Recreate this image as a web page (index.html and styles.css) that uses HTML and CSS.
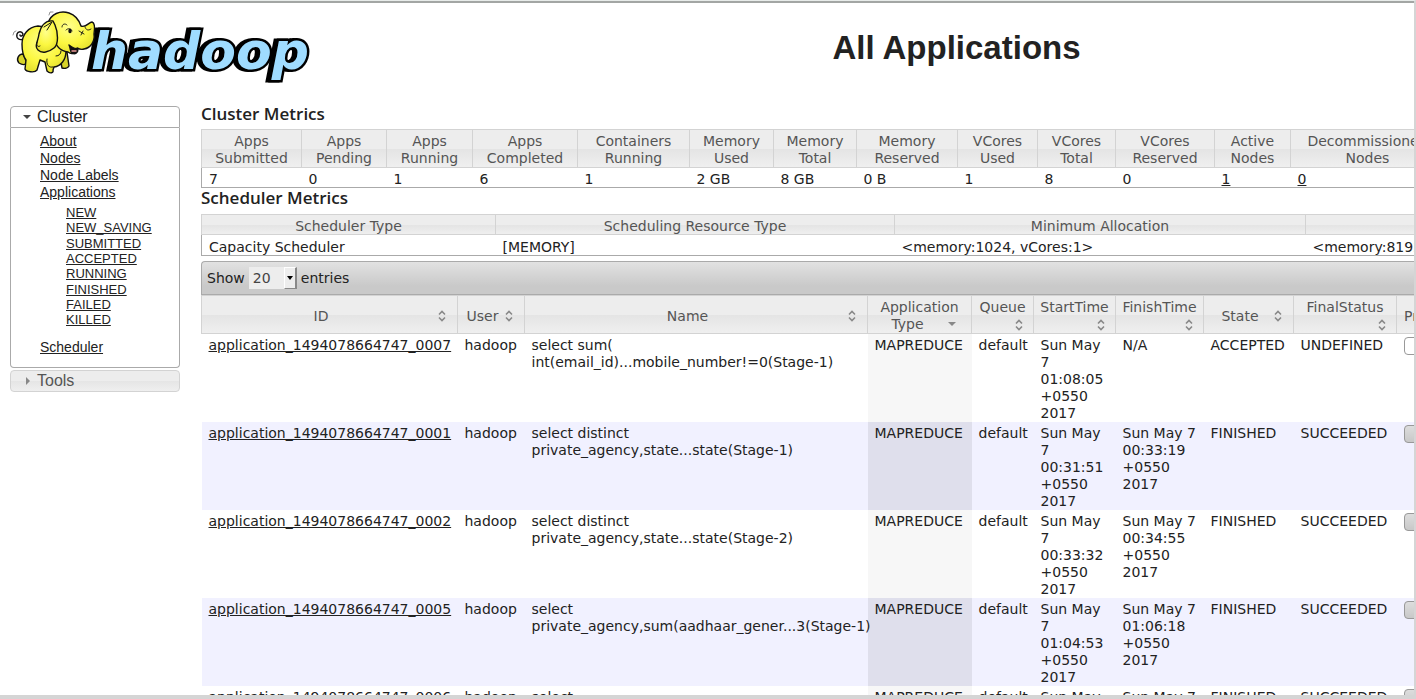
FILE: index.html
```html
<!DOCTYPE html>
<html lang="en">
<head>
<meta charset="utf-8">
<title>All Applications</title>
<link rel="stylesheet" href="styles.css">
</head>
<body>
<svg class="defs" aria-hidden="true">
  <symbol id="sort" viewBox="0 0 8 12"><path d="M1 4.5 4 1.5 7 4.5M1 7.5 4 10.500 7 7.500" fill="none" stroke="#888" stroke-width="1.6"/></symbol>
</svg>
<div class="frame">
  <header class="header">
    <a class="logo" href="#" aria-label="Hadoop">
      <svg width="304" height="76" viewBox="10 8 304 76">
        <defs>
          <radialGradient id="skin" cx="0.45" cy="0.35" r="0.7">
            <stop offset="0" stop-color="#ffff8c"/><stop offset="0.6" stop-color="#fbf740"/><stop offset="1" stop-color="#e0dc2c"/>
          </radialGradient>
        </defs>
        <text class="wordmark" x="91" y="69">hadoop</text>
        <g stroke="#111" stroke-width="1.400" stroke-linejoin="round" stroke-linecap="round">
          <path d="M24 39C19 41 16 38 17 34C18 31 22 31 23 34C23 36 20 37 20 35" fill="none"/>
          <path d="M13 35 14 32 16 31M49 15 50 12 53 12" fill="none" stroke="#777" stroke-width="0.800"/>
          <path d="M23 54C18 54 16 60 19 63C22 65 25 65 27 63Z" fill="#d8d42a"/>
          <path d="M60 57 62 68C65 69 68 68 69 66L67 52Z" fill="#d8d42a"/>
          <path d="M38 26C28 27 22 35 22 44C22 51 23 56 26 60L25 69C26 72 35 73 37 70L40 60 45 62 47 71C50 74 54 73 53 70L54 67C61 66 66 60 66 51L62 30Z" fill="url(#skin)"/>
          <path d="M48 23C51 14 60 10 69 13C75 15 79 20 81 26C86 28 89 22 92 22C95 23 95 28 94 34C95 41 91 48 84 49C81 50 79 49 77 48C76 53 72 55 68 52C60 51 55 45 54 36Z" fill="url(#skin)"/>
          <path d="M69 45C73 48 76 49 78 49C78 53 75 55 72 53C70 52 71 49 69 45Z" fill="#111"/>
          <path d="M72 51 76 51" stroke="#e99" stroke-width="1.500"/>
          <path d="M53 21C45 20 41 26 39 34C38 42 34 46 38 50C42 54 49 52 54 48C59 44 58 32 55 25C54 23 53 21 53 21Z" fill="url(#skin)"/>
          <path d="M44 27 52 22 47 30M40 46C37 48 36 44 37 42M56 56C59 56 61 54 61 51M47 59C46 65 49 68 53 67" fill="none" stroke-width="1"/>
          <path d="M62 27C62 24 65 23 67 25M66 30C68 28 71 28 72 31M79 31 84 34M81 35 83 31M85 27C86 30 88 31 91 29" fill="none" stroke-width="0.900"/>
          <ellipse cx="70" cy="31" rx="1" ry="1.500" fill="#111"/>
        </g>
      </svg>
    </a>
    <h1 class="title">All Applications</h1>
  </header>
  <div class="body">
    <nav class="sidebar">
      <h3 class="panel-head open"><button type="button"><span class="tri down"></span>Cluster</button></h3>
      <div class="panel">
        <ul class="menu">
          <li><a href="#">About</a></li>
          <li><a href="#">Nodes</a></li>
          <li><a href="#">Node Labels</a></li>
          <li><a href="#">Applications</a>
            <ul class="submenu">
              <li><a href="#">NEW</a></li>
              <li><a href="#">NEW_SAVING</a></li>
              <li><a href="#">SUBMITTED</a></li>
              <li><a href="#">ACCEPTED</a></li>
              <li><a href="#">RUNNING</a></li>
              <li><a href="#">FINISHED</a></li>
              <li><a href="#">FAILED</a></li>
              <li><a href="#">KILLED</a></li>
            </ul>
          </li>
          <li><a href="#">Scheduler</a></li>
        </ul>
      </div>
      <h3 class="panel-head closed"><button type="button"><span class="tri right"></span>Tools</button></h3>
    </nav>
    <main class="content">
      <h2>Cluster Metrics</h2>
      <table class="info cluster">
        <colgroup><col class="w100"><col class="w85"><col class="w86"><col class="w105"><col class="w112"><col class="w84"><col class="w83"><col class="w101"><col class="w80"><col class="w78"><col class="w99"><col class="w76"><col class="w154"></colgroup>
        <thead><tr><th>Apps<br>Submitted</th><th>Apps<br>Pending</th><th>Apps<br>Running</th><th>Apps<br>Completed</th><th>Containers<br>Running</th><th>Memory<br>Used</th><th>Memory<br>Total</th><th>Memory<br>Reserved</th><th>VCores<br>Used</th><th>VCores<br>Total</th><th>VCores<br>Reserved</th><th>Active<br>Nodes</th><th>Decommissioned<br>Nodes</th></tr></thead>
        <tbody><tr><td>7</td><td>0</td><td>1</td><td>6</td><td>1</td><td>2 GB</td><td>8 GB</td><td>0 B</td><td>1</td><td>8</td><td>0</td><td><a href="#">1</a></td><td><a href="#">0</a></td></tr></tbody>
      </table>
      <h2>Scheduler Metrics</h2>
      <table class="info scheduler">
        <colgroup><col class="w294"><col class="w399"><col class="w411"><col class="w411"></colgroup>
        <thead><tr><th>Scheduler Type</th><th>Scheduling Resource Type</th><th>Minimum Allocation</th><th></th></tr></thead>
        <tbody><tr><td>Capacity Scheduler</td><td>[MEMORY]</td><td>&lt;memory:1024, vCores:1&gt;</td><td>&lt;memory:8192, vCores:8&gt;</td></tr></tbody>
      </table>
      <div class="toolbar">
        <label for="len">Show</label>
        <span class="select"><select id="len"><option>20</option><option>40</option></select><span class="arrow"></span></span>
        <span>entries</span>
      </div>
      <table class="apps">
        <colgroup><col class="w256"><col class="w67"><col class="w343"><col class="w104"><col class="w62"><col class="w82"><col class="w88"><col class="w90"><col class="w103"><col class="w100"></colgroup>
        <thead><tr>
          <th><div class="sorth">ID<svg><use href="#sort"/></svg></div></th>
          <th><div class="sorth">User<svg><use href="#sort"/></svg></div></th>
          <th><div class="sorth">Name<svg><use href="#sort"/></svg></div></th>
          <th><div class="sorth low">Application Type<span class="desc"></span></div></th>
          <th><div class="sorth low">Queue<br>&nbsp;<svg><use href="#sort"/></svg></div></th>
          <th><div class="sorth low">StartTime<br>&nbsp;<svg><use href="#sort"/></svg></div></th>
          <th><div class="sorth low">FinishTime<br>&nbsp;<svg><use href="#sort"/></svg></div></th>
          <th><div class="sorth">State<svg><use href="#sort"/></svg></div></th>
          <th><div class="sorth low">FinalStatus<br>&nbsp;<svg><use href="#sort"/></svg></div></th>
          <th class="left">Progress</th>
        </tr></thead>
        <tbody>
          <tr><td><a href="#">application_1494078664747_0007</a></td><td>hadoop</td><td>select sum(<br>int(email_id)...mobile_number!=0(Stage-1)</td><td>MAPREDUCE</td><td>default</td><td>Sun May 7 01:08:05 +0550 2017</td><td>N/A</td><td>ACCEPTED</td><td>UNDEFINED</td><td><div class="bar empty"></div></td></tr>
          <tr><td><a href="#">application_1494078664747_0001</a></td><td>hadoop</td><td>select distinct<br>private_agency,state...state(Stage-1)</td><td>MAPREDUCE</td><td>default</td><td>Sun May 7 00:31:51 +0550 2017</td><td>Sun May 7 00:33:19 +0550 2017</td><td>FINISHED</td><td>SUCCEEDED</td><td><div class="bar"></div></td></tr>
          <tr><td><a href="#">application_1494078664747_0002</a></td><td>hadoop</td><td>select distinct<br>private_agency,state...state(Stage-2)</td><td>MAPREDUCE</td><td>default</td><td>Sun May 7 00:33:32 +0550 2017</td><td>Sun May 7 00:34:55 +0550 2017</td><td>FINISHED</td><td>SUCCEEDED</td><td><div class="bar"></div></td></tr>
          <tr><td><a href="#">application_1494078664747_0005</a></td><td>hadoop</td><td>select<br>private_agency,sum(aadhaar_gener...3(Stage-1)</td><td>MAPREDUCE</td><td>default</td><td>Sun May 7 01:04:53 +0550 2017</td><td>Sun May 7 01:06:18 +0550 2017</td><td>FINISHED</td><td>SUCCEEDED</td><td><div class="bar"></div></td></tr>
          <tr><td><a href="#">application_1494078664747_0006</a></td><td>hadoop</td><td>select</td><td>MAPREDUCE</td><td>default</td><td>Sun May 7</td><td>Sun May 7</td><td>FINISHED</td><td>SUCCEEDED</td><td><div class="bar"></div></td></tr>
        </tbody>
      </table>
    </main>
  </div>
</div>
</body>
</html>
```
FILE: styles.css
```css
* { box-sizing: border-box; }
body { margin: 0; font: 14px/17px "DejaVu Sans", sans-serif; color: #222; background: #fff; }
h1, h2, h3, ul { margin: 0; padding: 0; font-weight: normal; list-style: none; }
a { color: #222; }
.defs { display: none; }

.frame { height: 100vh; overflow: hidden; border: solid #d5d5d5; border-width: 1px 2px 4px 0; border-top-color: #e8ecea; box-shadow: inset 0 2px #a3a6a4; padding: 7px 0 0 10px; position: relative; }
.frame::after { content: ""; position: absolute; left: 0; right: 0; bottom: -4px; height: 1px; background: #999; }

.header { display: flex; height: 98px; }
.logo { flex: none; width: 304px; }
.logo svg { display: block; }
.wordmark { font: italic bold 52px "DejaVu Sans", sans-serif; fill: #9fdcff; stroke: #000; stroke-width: 5px; stroke-linejoin: miter; paint-order: stroke; filter: drop-shadow(-3px 0 0 #000); }
.title { flex: 1; text-align: center; font: bold 33px/80px "Liberation Sans", sans-serif; padding-left: 185px; }
.title { padding-right: -0px; }

.body { display: flex; gap: 21px; }
.sidebar { flex: none; width: 170px; font-family: "Liberation Sans", sans-serif; }
.panel-head { border: 1px solid #aaa; }
.panel-head button { display: flex; align-items: center; width: 100%; border: 0; padding: 0 0 0 12px; background: none; font: 16px/20px "Liberation Sans", sans-serif; color: inherit; }
.open { border-radius: 4px 4px 0 0; }
.closed { margin-top: 2px; border-color: #d3d3d3; border-radius: 4px; background: linear-gradient(#ededed 50%, #e5e5e5 50%, #efefef); color: #555; }
.tri { width: 14px; flex: none; }
.tri::before { content: ""; display: block; width: 0; border: 4px solid transparent; }
.down::before { border-top-color: #444; border-bottom: 0; }
.right::before { border-left-color: #888; border-right: 0; margin-left: 3px; }
.panel { border: 1px solid #aaa; border-top: 0; border-radius: 0 0 4px 4px; padding: 5px 0 11px 29px; }
.submenu { padding: 4px 0 11px 26px; font-size: 13px; line-height: 15px; }
.submenu li:nth-child(3n-1) { padding-bottom: 1px; }

.content { flex: 1; min-width: 0; }
h2 { font: 600 17px/15px "Open Sans", sans-serif; }
table { border-collapse: collapse; table-layout: fixed; width: 0; min-width: 100%; }
th { font-weight: normal; color: #555; padding: 3px 0 0; border: 1px solid #d3d3d3; }
thead tr { background: linear-gradient(#ededed 50%, #e4e4e4 50%, #f0f0f0); }
td { padding: 3px 7px 0; text-align: left; vertical-align: top; }
.info { margin-top: 8px; }
.info tbody tr { border: 1px solid #aaa; border-top: 0; }
.cluster { margin-bottom: 2px; }
.cluster td { line-height: 16px; }
.scheduler { margin-top: 9px; line-height: 16px; }
.scheduler td { padding-top: 4px; }
.toolbar { display: flex; align-items: center; gap: 4px; height: 34px; margin-top: 5px; padding: 0 5px; border: 1px solid #aaa; border-right: 0; border-radius: 4px 0 0 0; background: linear-gradient(#e2e2e2, #c9c9c9 75%); }
.select { position: relative; display: flex; }
.select select { appearance: none; width: 48px; height: 22px; border: 0; border-radius: 0; padding: 0 4px; background: #ededed; font: 14px/22px "DejaVu Sans", sans-serif; color: #444; }
.arrow { position: absolute; right: 0; top: 0; width: 13px; height: 22px; border: 1px solid; border-color: #fff #888 #888 #fff; border-right-width: 2px; background: #ededed; pointer-events: none; }
.arrow::before { content: ""; position: absolute; left: 2px; top: 8px; border: 3px solid transparent; border-top: 4px solid #000; border-bottom: 0; }

.apps thead tr { height: 38px; }
.apps th { padding: 3px 7px 0; }
.apps .left { text-align: left; }
.apps tbody tr { height: 88px; }
.apps tbody tr:nth-child(even) { background: #f1f1ff; }
.apps td:nth-child(3) { white-space: nowrap; }
.apps tbody td:nth-child(4) { background: #f7f7f7; }
.apps tbody tr:nth-child(even) td:nth-child(4) { background: #dfdfec; }
.sorth { position: relative; padding-right: 17px; }
.sorth svg { position: absolute; right: 4px; top: 2px; width: 8px; height: 12px; }
.low { padding: 0; margin: 0 -1px; }
.low svg { top: 20px; }
.desc { display: inline-block; margin: 0 -8px 0 24px; vertical-align: 3px; border: 4px solid transparent; border-top-color: #888; border-bottom: 0; }
.bar { width: 86px; height: 18px; border: 1px solid #999; border-radius: 4px; background: linear-gradient(#ddd, #c8c8c8); }
.empty { background: #fff; }

.w62 { width: 62px; } .w67 { width: 67px; } .w76 { width: 76px; } .w78 { width: 78px; }
.w80 { width: 80px; } .w82 { width: 82px; } .w83 { width: 83px; } .w84 { width: 84px; }
.w85 { width: 85px; } .w86 { width: 86px; } .w88 { width: 88px; } .w90 { width: 90px; }
.w99 { width: 99px; } .w100 { width: 100px; } .w101 { width: 101px; } .w103 { width: 103px; }
.w104 { width: 104px; } .w105 { width: 105px; } .w112 { width: 112px; } .w154 { width: 154px; }
.w256 { width: 256px; } .w294 { width: 294px; } .w343 { width: 343px; } .w399 { width: 399px; }
.w411 { width: 411px; }
```
